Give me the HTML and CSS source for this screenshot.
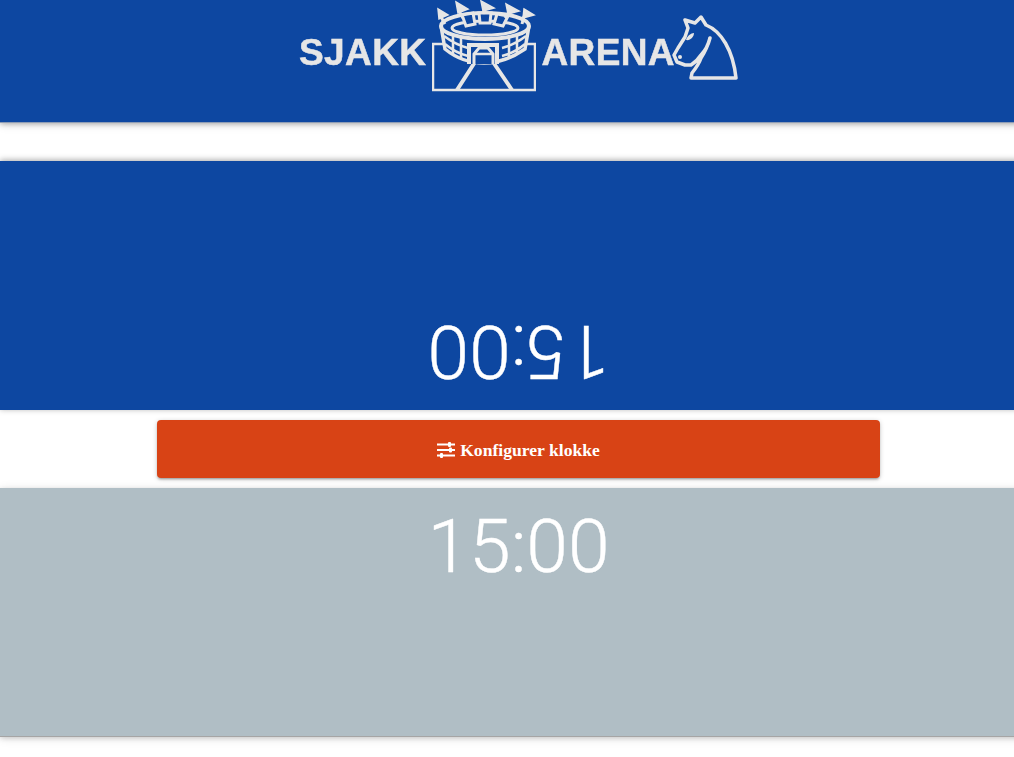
FILE: index.html
```html
<!DOCTYPE html>
<html lang="no">
<head>
<meta charset="UTF-8" />
<meta name="viewport" content="width=device-width, initial-scale=1" />
<title>Sjakk Arena - Klokke</title>
<link rel="stylesheet" href="styles.css">
</head>
<body>
  <div class="page">
    <header class="topbar">
      <div class="logo">
        <span class="logo-word">SJAKK</span>
        <svg class="stadium" viewBox="0 0 104 92" width="104" height="92" fill="none" stroke="#e6e6e6" stroke-width="2.5">
          <path d="M12 44H1V90H103V44H94" />
          <path d="M25 90L43 62M80 90L61 62" stroke-width="4" />
          <path d="M9 26L13 49C24 58 38 63 52 63C66 63 80 58 93 49L97 26" stroke-width="3.5" fill="#0d47a1" />
          <ellipse cx="53" cy="26" rx="44" ry="13" stroke-width="4" />
          <ellipse cx="53" cy="28" rx="33" ry="7" stroke-width="3" />
          <path d="M12 36C20 42 28 46 36 48M13 44C20 50 28 54 36 56M70 48C78 46 86 42 94 36M70 56C78 54 86 50 93 44M21 34V54M29 38V58M77 38V58M85 34V54" />
          <path d="M35 43H67V64H35Z" fill="#e6e6e6" stroke="none" />
          <path d="M39 64V47H63V64Z" fill="#0d47a1" stroke="none" />
          <path d="M42 64V54L47 48H56L61 54V64" stroke-width="3" />
          <path d="M42 54H61" stroke-width="2.5" />
          <path d="M30 15L41 13L43 24L34 26ZM47 13H59L58 23H48ZM65 14L76 16L71 26L62 24Z" stroke-width="3" fill="#0d47a1" />
          <path d="M6 9L16 15L7 19ZM24 2L36 9L26 13ZM49 1L62 8L51 11ZM74 4L87 11L76 14ZM92 9L102 15L91 18Z" fill="#e6e6e6" stroke-width="1.5" />
          <path d="M9 17L13 24M27 11L31 18M52 9L53 14M77 12L73 18M92 16L90 24" stroke-width="3" />
        </svg>
        <span class="logo-word">ARENA</span>
        <svg class="knight" viewBox="0 0 68 70" width="68" height="70" fill="none" stroke="#e6e6e6" stroke-width="3.5" stroke-linejoin="round">
          <path d="M15 6L25 9L31 3L36 11C51 17 63 36 66 64H21L22 59C26 54 29 50 31 44C35 38 38 31 40 24C38 32 35 37 31 41C28 46 24 49 21 51H15L7 48L4 41L8 34L15 23L18 14Z" />
          <path d="M16 26C17 22 21 19 24 19C24 23 20 27 16 26Z" fill="#e6e6e6" stroke="none" />
          <circle cx="10" cy="43" r="2" fill="#e6e6e6" stroke="none" />
        </svg>
      </div>
    </header>

    <section class="clock clock-opponent">
      <div class="clock-time">15:00</div>
    </section>

    <div class="controls">
      <button class="config-btn" type="button">
        <svg class="sliders-icon" viewBox="0 0 18 16" width="18" height="16" fill="#fff">
          <rect x="0" y="1.5" width="18" height="2" />
          <rect x="0" y="7" width="18" height="2" />
          <rect x="0" y="12.5" width="18" height="2" />
          <rect x="11" y="0" width="3" height="5" rx="1" />
          <rect x="12" y="5.5" width="3" height="5" rx="1" />
          <rect x="3" y="11" width="3" height="5" rx="1" />
        </svg>
        Konfigurer klokke
      </button>
    </div>

    <section class="clock clock-player">
      <div class="clock-time">15:00</div>
    </section>
  </div>
</body>
</html>
```

FILE: styles.css
```css
* {
  box-sizing: border-box;
}
html, body {
  margin: 0;
  padding: 0;
  height: 100%;
  overflow: hidden;
  background: #fff;
}
.page {
  width: 1037px;
  font-family: 'Liberation Serif', serif;
}

/* Toppen */
.topbar {
  height: 122px;
  background: #0d47a1;
  display: flex;
  justify-content: center;
  box-shadow: 0 1px 0 #8e9db5, 0 2px 5px rgba(0,0,0,0.26), 0 2px 10px rgba(0,0,0,0.14);
  margin-bottom: 39px;
}
.logo {
  display: flex;
  align-items: flex-start;
  height: 92px;
  color: #e6e6e6;
}
.logo-word {
  font-family: 'Liberation Sans', sans-serif;
  font-weight: 700;
  font-size: 37px;
  letter-spacing: 0.4px;
  line-height: 1;
  margin-top: 34px;
  -webkit-text-stroke: 0.5px #e6e6e6;
  filter: blur(0.4px);
}
.stadium {
  margin: 0 5px 0 6px;
  filter: blur(0.4px);
}
.knight {
  margin: 14px 0 0 -5px;
  filter: blur(0.3px);
}

/* Klokkene */
.clock {
  height: 248px;
  color: #fff;
  text-align: center;
}
.clock-opponent {
  height: 249px;
  padding-top: 149px;
  background: #0d47a1;
  box-shadow: 0 -1px 6px rgba(0,0,0,0.35);
}
.clock-opponent .clock-time {
  transform: rotate(180deg);
}
.clock-player {
  background: #b0bec5;
  box-shadow: 0 1px 0 #a5a5a5, 0 2px 5px rgba(0,0,0,0.16), 0 2px 10px rgba(0,0,0,0.12);
}
.clock-time {
  font-family: Roboto, sans-serif;
  font-weight: 300;
  font-size: 75px;
  line-height: 100px;
  height: 100px;
  padding-top: 8px;
  -webkit-text-stroke: 0.4px #fff;
}

/* Knapp */
.controls {
  height: 78px;
  padding: 10px 157px 0;
}
.config-btn {
  width: 100%;
  height: 58px;
  padding: 2px 0 0;
  display: flex;
  align-items: center;
  justify-content: center;
  gap: 5px;
  background: #d84315;
  color: #fff;
  border: none;
  border-radius: 4px;
  font-family: 'Liberation Serif', serif;
  font-size: 17.6px;
  font-weight: 700;
  box-shadow: 0 2px 2px 0 rgba(0,0,0,0.14), 0 3px 1px -2px rgba(0,0,0,0.12), 0 1px 5px 0 rgba(0,0,0,0.2);
}
.sliders-icon {
  display: block;
}
```
